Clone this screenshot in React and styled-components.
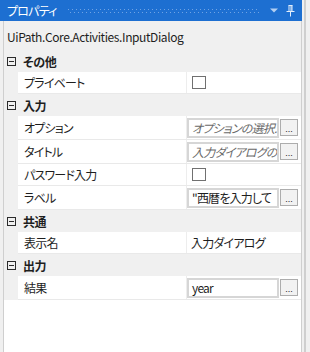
import React from "react";
import styled, { createGlobalStyle } from "styled-components";

const GlobalStyle = createGlobalStyle`
  html, body {
    margin: 0;
    padding: 0;
    background: #f0f0f0;
  }
  body {
    font-family: "Noto Sans CJK JP", "Noto Sans", sans-serif;
    font-size: 12px;
    color: #1e1e1e;
    font-feature-settings: "palt";
    letter-spacing: -0.4px;
  }
`;

const Window = styled.div`
  width: 310px;
  height: 352px;
  display: flex;
  overflow: hidden;
`;

const Panel = styled.div`
  width: 302px;
  display: flex;
  flex-direction: column;
`;

const TitleBar = styled.div`
  height: 21px;
  background: #1d6fd1;
  display: flex;
  align-items: center;
  padding: 0 7px 0 7px;
  box-sizing: border-box;
`;

const TitleText = styled.span`
  color: #ffffff;
  font-size: 12px;
  line-height: 21px;
  letter-spacing: -0.8px;
`;

/* the dotted grip pattern of a docked window */
const Grip = styled.span`
  flex: 1;
  height: 4px;
  margin: 1px 10px 0 11px;
  background:
    repeating-linear-gradient(90deg, #6fa3e4 0 1px, transparent 1px 4px) 0 0 / 100% 1px no-repeat,
    repeating-linear-gradient(90deg, transparent 0 2px, #6fa3e4 2px 3px, transparent 3px 4px) 0 3px / 100% 1px no-repeat;
`;

const TitleIcons = styled.span`
  display: flex;
  align-items: center;
  gap: 8px;
`;

const Splitter = styled.div`
  flex: 1;
  background: linear-gradient(90deg, #f0f0f0 0 2px, #cfcfcf 2px 4px, #f0f0f0 4px);
`;

const Body = styled.div`
  flex: 1;
  display: flex;
  padding-left: 3px;
  min-height: 0;
`;

const Content = styled.div`
  flex: 1;
  display: flex;
  flex-direction: column;
  border-left: 1px solid #cfcfcf;
  border-right: 1px solid #cfcfcf;
  background: #ffffff;
`;

const TypeName = styled.div`
  height: 29px;
  background: #f0f0f0;
  padding: 1px 0 0 3px;
  box-sizing: border-box;
  display: flex;
  align-items: center;
  font-size: 12px;
`;

const CategoryRow = styled.div`
  height: 22px;
  background: #f0f0f0;
  display: flex;
  align-items: center;
  padding-left: 3px;
`;

const Toggle = styled.span`
  width: 7px;
  height: 7px;
  border: 1px solid #2b2b2b;
  position: relative;
  margin-right: 7px;
  &::after {
    content: "";
    position: absolute;
    left: 1px;
    right: 1px;
    top: 3px;
    height: 1px;
    background: #2b2b2b;
  }
`;

const CategoryLabel = styled.span`
  font-weight: bold;
  font-size: 12px;
`;

const PropRow = styled.div`
  height: ${(p) => (p.$tall ? "24px" : "22px")};
  display: flex;
  background: #f0f0f0;
`;

const RowBody = styled.div`
  flex: 1;
  margin-left: 14px;
  display: flex;
  background: #ffffff;
  border-bottom: 1px solid #e9e9e9;
`;

const LabelCell = styled.div`
  width: 169px;
  padding-left: 6px;
  box-sizing: border-box;
  display: flex;
  align-items: center;
  border-right: 1px solid #ededed;
  white-space: nowrap;
  letter-spacing: -0.8px;
`;

const ValueCell = styled.div`
  flex: 1;
  display: flex;
  align-items: center;
  padding: 0 2px 0 0;
  min-width: 0;
`;

const CheckBox = styled.span`
  width: 12px;
  height: 11px;
  border: 1px solid #707070;
  margin-left: 5px;
  background: #ffffff;
`;

const TextBox = styled.div`
  width: 92px;
  height: 20px;
  box-sizing: border-box;
  border: 2px solid #d6d6d6;
  padding-left: 3px;
  display: flex;
  align-items: center;
  overflow: hidden;
  white-space: nowrap;
  color: ${(p) => (p.$hint ? "#6a6a6a" : "#1e1e1e")};
  font-style: ${(p) => (p.$hint ? "italic" : "normal")};
  font-size: 12px;
  letter-spacing: -0.8px;
`;

const EllipsisButton = styled.div`
  width: 18px;
  height: 17px;
  margin-left: 1px;
  box-sizing: border-box;
  border: 1px solid #adadad;
  background: #f2f2f2;
  font-family: "Liberation Sans", sans-serif;
  font-size: 9px;
  letter-spacing: 0;
  line-height: 18px;
  text-align: center;
  color: #222;
`;

const PlainValue = styled.span`
  padding-left: 4px;
  white-space: nowrap;
  letter-spacing: -0.8px;
`;

const Filler = styled.div`
  flex: 1;
  background: #ffffff;
`;

const DropArrow = () => (
  <svg width="8" height="5" viewBox="0 0 8 5">
    <path d="M0 0.5 H8 L4 4.5 Z" fill="#b3cff2" />
  </svg>
);

const PinIcon = () => (
  <svg width="9" height="12" viewBox="0 0 9 12">
    <path
      d="M2.5 0.5 H6.5 M3 0.5 V6.5 M6 0.5 V6.5 M5 1 V6 M0.5 6.5 H8.5 M4.5 6.5 V11.5"
      stroke="#e3eefb"
      strokeWidth="1"
      fill="none"
    />
  </svg>
);

const properties = [
  { cat: "その他" },
  { label: "プライベート", kind: "check" },
  { cat: "入力" },
  { label: "オプション", kind: "input", value: "オプションの選択.", hint: true },
  { label: "タイトル", kind: "input", value: "入力ダイアログの", hint: true },
  { label: "パスワード入力", kind: "check" },
  { label: "ラベル", kind: "input", value: "\"西暦を入力して" },
  { cat: "共通" },
  { label: "表示名", kind: "text", value: "入力ダイアログ" },
  { cat: "出力" },
  { label: "結果", kind: "input", value: "year" },
];

const Value = ({ item }) => {
  if (item.kind === "check") return <CheckBox />;
  if (item.kind === "text") return <PlainValue>{item.value}</PlainValue>;
  return (
    <>
      <TextBox $hint={item.hint}>{item.value}</TextBox>
      <EllipsisButton>...</EllipsisButton>
    </>
  );
};

export default function App() {
  return (
    <>
      <GlobalStyle />
      <Window>
        <Panel>
          <TitleBar>
            <TitleText>プロパティ</TitleText>
            <Grip />
            <TitleIcons>
              <DropArrow />
              <PinIcon />
            </TitleIcons>
          </TitleBar>
          <Body>
            <Content>
              <TypeName>UiPath.Core.Activities.InputDialog</TypeName>
              {properties.map((item, i) =>
                item.cat ? (
                  <CategoryRow key={i}>
                    <Toggle />
                    <CategoryLabel>{item.cat}</CategoryLabel>
                  </CategoryRow>
                ) : (
                  <PropRow key={i} $tall={item.kind === "input"}>
                    <RowBody>
                      <LabelCell>{item.label}</LabelCell>
                      <ValueCell>
                        <Value item={item} />
                      </ValueCell>
                    </RowBody>
                  </PropRow>
                )
              )}
              <Filler />
            </Content>
          </Body>
        </Panel>
        <Splitter />
      </Window>
    </>
  );
}
